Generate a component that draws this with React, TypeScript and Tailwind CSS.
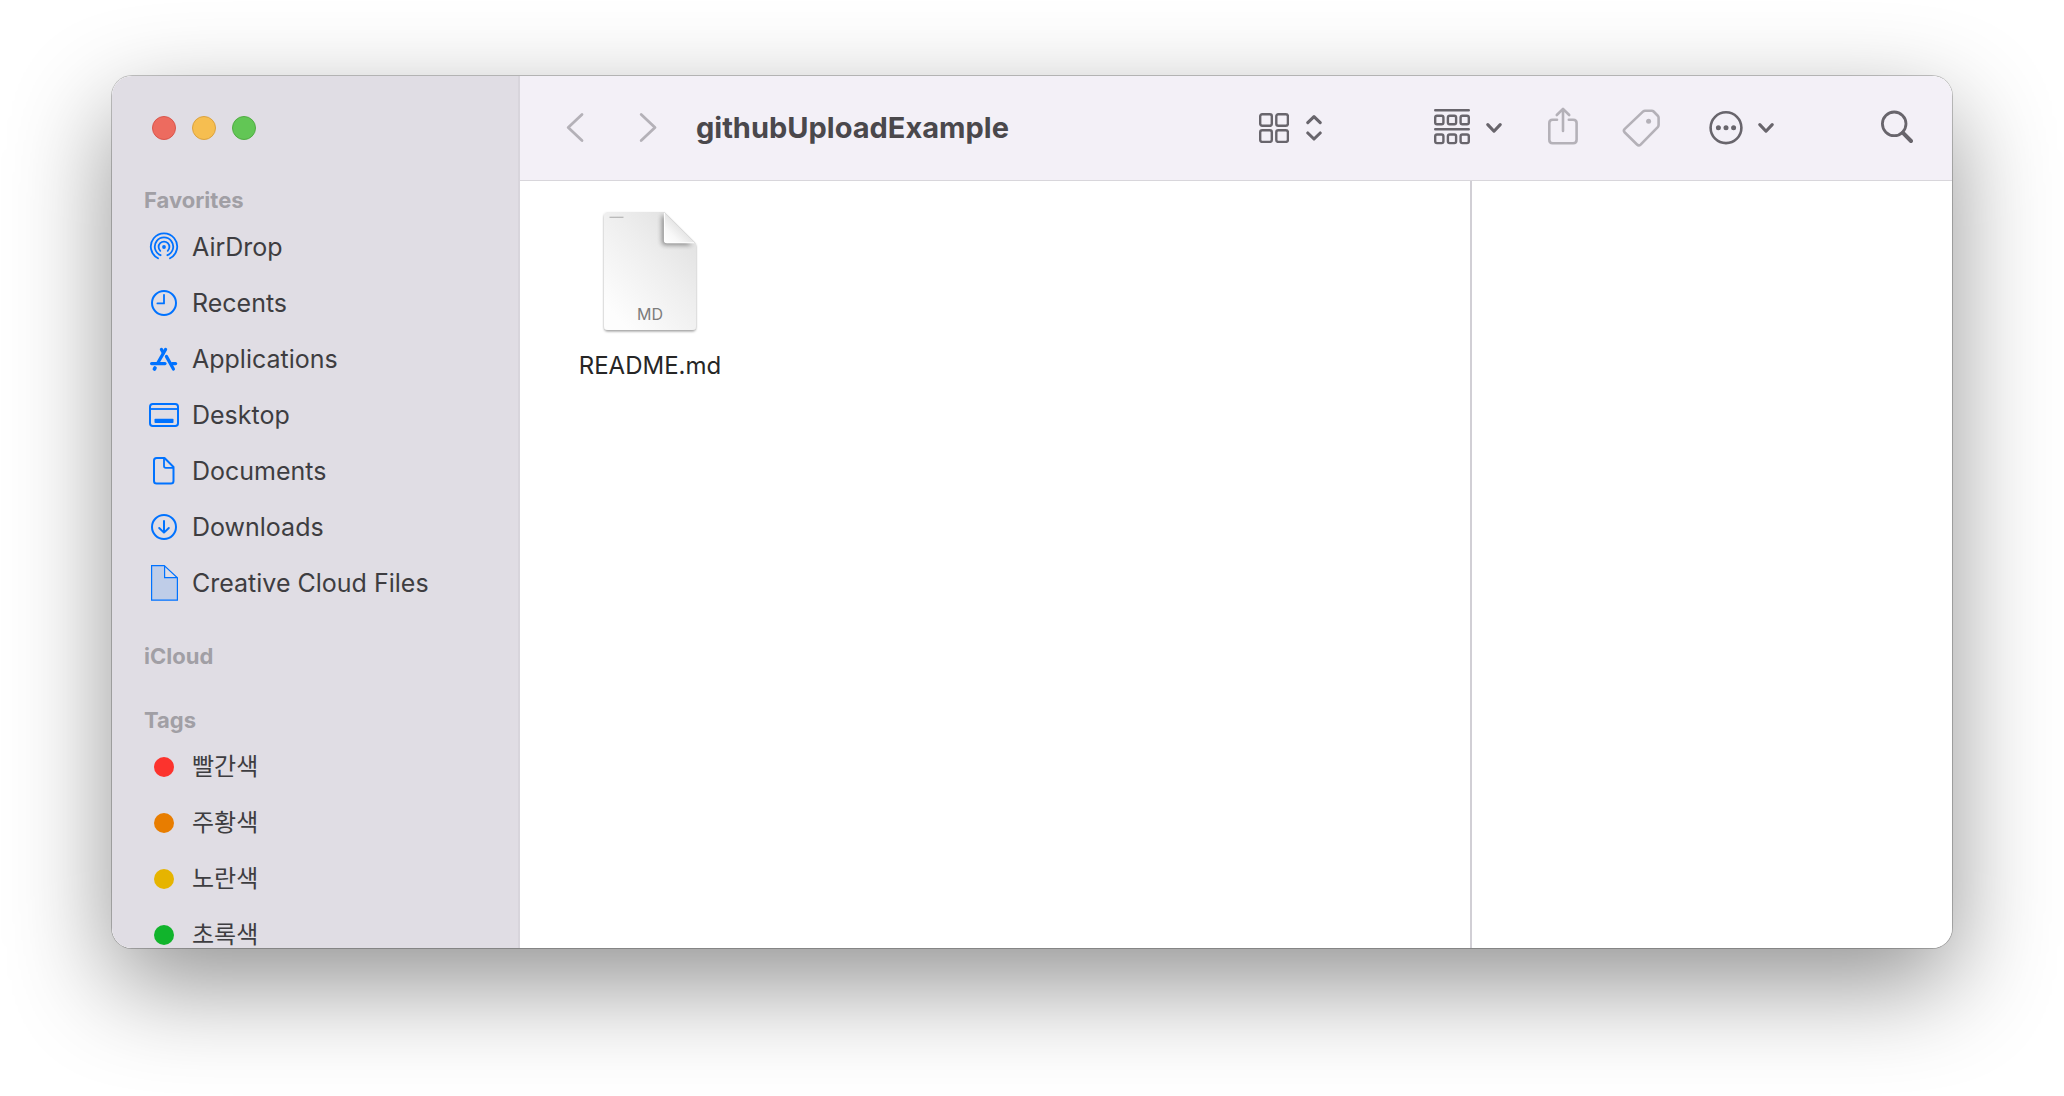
import React from "react";

const BLUE = "#0072ff";

function AirDropIcon() {
  return (
    <svg width="32" height="36" viewBox="0 0 32 36" fill="none" stroke={BLUE} strokeWidth="1.8" strokeLinecap="round">
      <path d="M10 29.3A13.2 13.2 0 1 1 22 29.3" />
      <path d="M12.6 26.2A9.2 9.2 0 1 1 19.4 26.2" />
      <path d="M12.3 21.9A5.4 5.4 0 1 1 19.7 21.9" />
      <circle cx="16" cy="18" r="1.9" fill={BLUE} stroke="none" />
    </svg>
  );
}

function RecentsIcon() {
  return (
    <svg width="32" height="36" viewBox="0 0 32 36" fill="none" stroke={BLUE} strokeWidth="2" strokeLinecap="round" strokeLinejoin="round">
      <circle cx="16" cy="18" r="12" />
      <path d="M16 9.8V18.4H9.4" strokeWidth="1.8" />
    </svg>
  );
}

function ApplicationsIcon() {
  return (
    <svg width="32" height="36" viewBox="0 0 32 36" fill="none" stroke={BLUE} strokeWidth="3.2" strokeLinecap="round">
      <path d="M17.6 8.4L9.6 22.2" />
      <path d="M13.4 8.4L15.4 12" />
      <path d="M18.4 15.4L25.4 28" />
      <path d="M3.6 22.6H17" />
      <path d="M24.2 22.6H27.6" />
      <path d="M7 27L6.4 28" strokeWidth="3.6" />
    </svg>
  );
}

function DesktopIcon() {
  return (
    <svg width="32" height="36" viewBox="0 0 32 36" fill="none" stroke={BLUE} strokeWidth="2">
      <rect x="2" y="7" width="28" height="22" rx="2.8" />
      <path d="M2 12H30" strokeWidth="1.8" />
      <rect x="6.5" y="21.8" width="19" height="4.2" rx="0.8" fill={BLUE} stroke="none" />
    </svg>
  );
}

function DocumentsIcon() {
  return (
    <svg width="32" height="36" viewBox="0 0 32 36" fill="none" stroke={BLUE} strokeWidth="2" strokeLinejoin="round">
      <path d="M16.5 5H8.6Q6 5 6 7.6V28Q6 30.6 8.6 30.6H22.9Q25.5 30.6 25.5 28V14Z" />
      <path d="M16 5.4V13Q16 14.8 17.8 14.8H25.2" strokeWidth="1.8" />
    </svg>
  );
}

function DownloadsIcon() {
  return (
    <svg width="32" height="36" viewBox="0 0 32 36" fill="none" stroke={BLUE} strokeWidth="2" strokeLinecap="round" strokeLinejoin="round">
      <circle cx="16" cy="18" r="12" />
      <path d="M16 12V23.6M11.2 19L16 23.6L20.8 19" />
    </svg>
  );
}

function CloudFileIcon() {
  return (
    <svg width="32" height="36" viewBox="0 0 32 36" fill="none" stroke={BLUE} strokeWidth="1.2">
      <path d="M3.6 0.6H16.5V12.6H29.4V35.2H3.6Z" fill="#bfcde8" stroke="none" />
      <path d="M3.6 0.6H16.2L29.4 12.8V35.2H3.6Z" />
      <path d="M16.6 0.8V12.6H29.2" />
    </svg>
  );
}

const favorites = [
  { label: "AirDrop", icon: <AirDropIcon /> },
  { label: "Recents", icon: <RecentsIcon /> },
  { label: "Applications", icon: <ApplicationsIcon /> },
  { label: "Desktop", icon: <DesktopIcon /> },
  { label: "Documents", icon: <DocumentsIcon /> },
  { label: "Downloads", icon: <DownloadsIcon /> },
  { label: "Creative Cloud Files", icon: <CloudFileIcon /> },
];

const tags = [
  { label: "빨간색", color: "bg-[#fc332d]" },
  { label: "주황색", color: "bg-[#e87d00]" },
  { label: "노란색", color: "bg-[#e6b400]" },
  { label: "초록색", color: "bg-[#11b42c]" },
];

function SectionTitle({ children }: { children: React.ReactNode }) {
  return <h2 className="flex h-9 items-center px-8 pb-0.5 text-[22px] leading-7 font-bold text-[#a19fa5]">{children}</h2>;
}

function SidebarRow({ icon, label, size }: { icon: React.ReactNode; label: string; size: string }) {
  return (
    <li>
      <button type="button" className="flex h-14 w-full items-center gap-3 pl-9 text-left">
        <span className="flex w-8 shrink-0 justify-center">{icon}</span>
        <span className={`leading-8 whitespace-nowrap ${size}`}>{label}</span>
      </button>
    </li>
  );
}

function Sidebar() {
  return (
    <aside className="flex w-[408px] shrink-0 flex-col overflow-hidden border-r-2 border-[#d8d5dc] bg-[#e0dde4] text-[#3e3d41]">
      <div className="flex h-[104px] shrink-0 items-center gap-4 pl-10">
        <button type="button" aria-label="Close" className="size-6 rounded-full border border-[#d9564c] bg-[#ed6b5f]" />
        <button type="button" aria-label="Minimize" className="size-6 rounded-full border border-[#dba23f] bg-[#f6be50]" />
        <button type="button" aria-label="Zoom" className="size-6 rounded-full border border-[#51ac43] bg-[#62c655]" />
      </div>
      <nav className="min-h-0 flex-1 overflow-hidden pt-[3px]">
        <SectionTitle>Favorites</SectionTitle>
        <ul className="mb-7">
          {favorites.map((f) => (
            <SidebarRow key={f.label} size="text-[25px]" icon={f.icon} label={f.label} />
          ))}
        </ul>
        <SectionTitle>iCloud</SectionTitle>
        <div className="h-7" />
        <SectionTitle>Tags</SectionTitle>
        <ul>
          {tags.map((t) => (
            <SidebarRow key={t.label} size="text-[24px]" label={t.label} icon={<span className={`size-5 rounded-full ${t.color}`} />} />
          ))}
        </ul>
      </nav>
    </aside>
  );
}

function ChevronDown() {
  return (
    <svg width="16" height="12" viewBox="0 0 16 12" fill="none" stroke="currentColor" strokeWidth="3.1" strokeLinecap="round" strokeLinejoin="round">
      <path d="M1.8 2.6L8 9.2L14.2 2.6" />
    </svg>
  );
}

function Toolbar() {
  return (
    <header className="flex h-[105px] shrink-0 items-center border-b border-[#d8d6db] bg-[#f3f0f7] pr-[39px] pl-[46px] text-[#68656c]">
      <button type="button" aria-label="Back" className="text-[#b4b1b8]">
        <svg width="18" height="32" viewBox="0 0 18 32" fill="none" stroke="currentColor" strokeWidth="2.8" strokeLinecap="round" strokeLinejoin="round">
          <path d="M16 2.5L2.2 15.5L16 28.5" />
        </svg>
      </button>
      <button type="button" aria-label="Forward" className="ml-[55px] text-[#b4b1b8]">
        <svg width="18" height="32" viewBox="0 0 18 32" fill="none" stroke="currentColor" strokeWidth="2.8" strokeLinecap="round" strokeLinejoin="round">
          <path d="M2.2 2.5L16 15.5L2.2 28.5" />
        </svg>
      </button>
      <h1 className="ml-[39px] flex-1 text-[29px] leading-9 font-bold text-[#4a484c]">githubUploadExample</h1>
      <div className="flex items-center">
        <button type="button" aria-label="View as icons" className="flex items-center gap-[17px]">
          <svg width="30" height="30" viewBox="0 0 30 30" fill="none" stroke="currentColor" strokeWidth="2.4">
            <rect x="1.2" y="1.2" width="11.6" height="11.6" rx="2" />
            <rect x="17.3" y="1.2" width="11.6" height="11.6" rx="2" />
            <rect x="1.2" y="17.3" width="11.6" height="11.6" rx="2" />
            <rect x="17.3" y="17.3" width="11.6" height="11.6" rx="2" />
          </svg>
          <svg width="16" height="28" viewBox="0 0 16 28" fill="none" stroke="currentColor" strokeWidth="3.1" strokeLinecap="round" strokeLinejoin="round">
            <path d="M1.8 8.6L8 2.6L14.2 8.6M1.8 19L8 25L14.2 19" />
          </svg>
        </button>
        <button type="button" aria-label="Group items" className="ml-28 flex items-center gap-4">
          <svg width="36" height="38" viewBox="0 1 36 38" fill="none" stroke="currentColor" strokeWidth="2.4">
            <path d="M1.2 2.2H34.8M1.2 21.2H34.8" strokeLinecap="round" />
            <rect x="1.2" y="7.7" width="8.2" height="8.6" rx="1.8" />
            <rect x="13.9" y="7.7" width="8.2" height="8.6" rx="1.8" />
            <rect x="26.6" y="7.7" width="8.2" height="8.6" rx="1.8" />
            <rect x="1.2" y="26.5" width="8.2" height="8.6" rx="1.8" />
            <rect x="13.9" y="26.5" width="8.2" height="8.6" rx="1.8" />
            <rect x="26.6" y="26.5" width="8.2" height="8.6" rx="1.8" />
          </svg>
          <ChevronDown />
        </button>
        <button type="button" aria-label="Share" className="ml-[46px] text-[#b4b1b8]">
          <svg width="30" height="44" viewBox="0 0 30 44" fill="none" stroke="currentColor" strokeWidth="2.6" strokeLinecap="round" strokeLinejoin="round">
            <path d="M9 13.7H4.6Q1.3 13.7 1.3 17V33.8Q1.3 37.3 4.6 37.3H25.2Q28.6 37.3 28.6 33.8V17Q28.6 13.7 25.2 13.7H20.8" />
            <path d="M15 25V3.4M8.8 9L15 2.8L21.2 9" />
          </svg>
        </button>
        <button type="button" aria-label="Edit tags" className="ml-11 text-[#b4b1b8]">
          <svg width="38" height="38" viewBox="0 0 38 38" fill="none" stroke="currentColor" strokeWidth="2.6" strokeLinejoin="round">
            <path d="M21.2 2.4Q22 1.7 23 1.7H29.8Q30.8 1.7 31.6 2.5L36 7Q36.6 7.8 36.6 8.9V15.8Q36.6 17 36 17.8L18.6 35.6Q16.8 37.3 15 35.5L2.8 23.5Q1 21.7 2.8 19.9Z" />
            <circle cx="26.6" cy="12.2" r="2.5" fill="currentColor" stroke="none" />
          </svg>
        </button>
        <button type="button" aria-label="More actions" className="ml-[49px] flex items-center gap-[15px]">
          <svg width="34" height="34" viewBox="0 0 34 34" fill="none" stroke="currentColor" strokeWidth="2.6">
            <circle cx="17" cy="16.7" r="15.4" />
            <g fill="currentColor" stroke="none">
              <circle cx="9.4" cy="16.7" r="2.5" />
              <circle cx="17" cy="16.7" r="2.5" />
              <circle cx="24.6" cy="16.7" r="2.5" />
            </g>
          </svg>
          <ChevronDown />
        </button>
        <button type="button" aria-label="Search" className="ml-[107px]">
          <svg width="32" height="36" viewBox="0 0 32 36" fill="none" stroke="currentColor" strokeLinecap="round">
            <circle cx="13.2" cy="13.8" r="11.8" strokeWidth="2.8" />
            <path d="M22 22.8L30 31" strokeWidth="4" />
          </svg>
        </button>
      </div>
    </header>
  );
}

const SHEET = "M10 4H66L98 36V118Q98 122 94 122H10Q6 122 6 118V8Q6 4 10 4Z";

function MarkdownFileIcon() {
  return (
    <svg width="104" height="128" viewBox="0 0 104 128">
      <defs>
        <linearGradient id="page" x1="0.15" y1="0.9" x2="0.85" y2="0.1">
          <stop offset="0" stopColor="#fdfdfd" />
          <stop offset="0.6" stopColor="#eeeeee" />
          <stop offset="1" stopColor="#e2e2e2" />
        </linearGradient>
        <linearGradient id="fold" gradientUnits="userSpaceOnUse" x1="67" y1="35" x2="82" y2="20">
          <stop offset="0" stopColor="#ffffff" />
          <stop offset="0.5" stopColor="#f8f8f8" />
          <stop offset="1" stopColor="#e6e6e6" />
        </linearGradient>
        <filter id="drop" x="-10%" y="-10%" width="120%" height="125%">
          <feDropShadow dx="0" dy="1.5" stdDeviation="1.3" floodColor="#000" floodOpacity="0.38" />
        </filter>
        <filter id="soft" x="-40%" y="-40%" width="180%" height="180%">
          <feGaussianBlur stdDeviation="2.6" />
        </filter>
        <clipPath id="sheet">
          <path d={SHEET} />
        </clipPath>
      </defs>
      <path d={SHEET} fill="url(#page)" filter="url(#drop)" />
      <g clipPath="url(#sheet)">
        <path d="M64 8V34Q64 37 67 37H94L66 7Z" fill="#000" opacity="0.42" filter="url(#soft)" />
      </g>
      <path d="M66 4.6V32.5Q66 35 68.5 35H97Z" fill="url(#fold)" />
      <path d="M66.4 5V32.5Q66.4 34.8 68.7 34.8H96.5" fill="none" stroke="#ffffff" strokeWidth="1" />
      <path d="M66.5 4.4L97.6 35.4" fill="none" stroke="#d6d6d6" strokeWidth="0.9" />
      <path d="M11.5 9.2H25.5" stroke="#a9a9a9" strokeWidth="1.1" />
      <text x="52" y="112" textAnchor="middle" fill="#7c7c7c" fontSize="16" fontFamily="Inter, sans-serif">
        MD
      </text>
    </svg>
  );
}

export default function App() {
  return (
    <main className="flex h-screen overflow-hidden bg-white px-28 pt-[76px] pb-[148px] font-[Inter,'Noto_Sans_CJK_KR',sans-serif]">
      <div className="flex min-w-0 flex-1 rounded-[20px] shadow-[0_0_0_1px_rgba(0,0,0,0.22),0_36px_100px_rgba(0,0,0,0.43)]">
        <div className="flex min-w-0 flex-1 overflow-hidden rounded-[20px] bg-white">
          <Sidebar />
          <section className="flex min-w-0 flex-1 flex-col">
            <Toolbar />
            <div className="flex min-h-0 flex-1">
              <div className="min-w-0 flex-1 px-10 pt-[27px]">
                <button type="button" className="flex w-[180px] flex-col items-center">
                  <MarkdownFileIcon />
                  <span className="mt-3.5 text-[24px] leading-8 text-[#262626]">README.md</span>
                </button>
              </div>
              <aside aria-label="Preview" className="w-[482px] shrink-0 border-l-2 border-[#d1cfd5]" />
            </div>
          </section>
        </div>
      </div>
    </main>
  );
}
